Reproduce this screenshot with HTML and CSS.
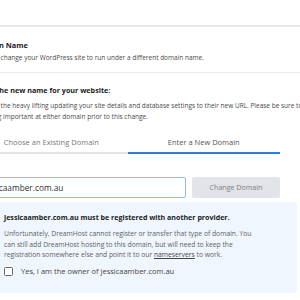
FILE: index.html
```html
<!DOCTYPE html>
<html>
<head>
<meta charset="utf-8">
<link rel="stylesheet" href="styles.css">
</head>
<body>
<div class="topbar"></div>
<div class="page">
  <section class="intro">
    <h2 class="title">Domain Name</h2>
    <p class="lead">You can change your WordPress site to run under a different domain name.</p>
  </section>
  <section class="change">
    <h3 class="subtitle">Enter the new name for your website:</h3>
    <p class="lead">We'll do the heavy lifting updating your site details and database settings to their new URL. Please be sure to back up<br>anything important at either domain prior to this change.</p>
    <div class="tabs">
      <div class="tab">Choose an Existing Domain</div>
      <div class="tab active">Enter a New Domain</div>
    </div>
    <div class="row">
      <div class="input">jessicaamber.com.au</div>
      <div class="btn">Change Domain</div>
    </div>
    <div class="notice">
      <div class="notice-title">jessicaamber.com.au must be registered with another provider.</div>
      <p class="notice-text">Unfortunately, DreamHost cannot register or transfer that type of domain. You<br>can still add DreamHost hosting to this domain, but will need to keep the<br>registration somewhere else and point it to our <u>nameservers</u> to work.</p>
      <label class="check"><span class="box"></span>Yes, I am the owner of jessicaamber.com.au</label>
    </div>
  </section>
</div>
</body>
</html>
```
FILE: styles.css
```css
html, body {
  margin: 0;
  padding: 0;
  background: #fff;
  overflow: hidden;
  width: 300px;
  height: 300px;
}
body {
  font-family: "Open Sans", "Liberation Sans", sans-serif;
  color: #333;
}
.topbar {
  height: 25px;
  border-bottom: 2px solid #e8e8e8;
}
.page {
  margin-left: -25px;
  width: 325px;
}
.intro {
  padding: 12px 0 9px;
  border-bottom: 1px solid #ececec;
}
.title {
  margin: 0;
  font-size: 7.4px;
  font-weight: 700;
  line-height: 12px;
  color: #222;
}
.lead {
  margin: 0;
  font-size: 6.5px;
  line-height: 11px;
  color: #4a4a4a;
  white-space: nowrap;
}
.intro .lead {
  margin-top: 1px;
}
.change {
  padding-top: 11px;
}
.subtitle {
  margin: 0 0 4px;
  font-size: 7.2px;
  font-weight: 700;
  line-height: 12px;
  color: #222;
}
.tabs {
  display: flex;
  width: 305px;
  margin-top: 9px;
}
.tab {
  flex: 1;
  text-align: center;
  font-size: 7.5px;
  line-height: 10px;
  color: #777;
  padding: 6px 0 5px;
  border-bottom: 2px solid #e5e5e5;
}
.tab.active {
  border-bottom-color: #2f7fd6;
  color: #555;
}
.row {
  display: flex;
  gap: 6px;
  width: 305px;
  margin-top: 23px;
}
.input {
  flex: 1;
  height: 21px;
  box-sizing: border-box;
  border: 1px solid #93bbe8;
  border-radius: 2px;
  padding: 0 6px;
  font-size: 8.3px;
  line-height: 19px;
  color: #333;
}
.btn {
  width: 88px;
  height: 21px;
  box-sizing: border-box;
  background: #e1e4e8;
  border-radius: 2px;
  font-size: 7.1px;
  line-height: 21px;
  text-align: center;
  color: #808080;
}
.notice {
  margin-top: 4px;
  width: 322px;
  box-sizing: border-box;
  background: #f0f6fd;
  border-radius: 4px;
  padding: 10px 8px 16px 29px;
}
.notice-title {
  font-size: 7.1px;
  font-weight: 700;
  color: #222;
  line-height: 10px;
}
.notice-text {
  margin: 7px 0 0;
  font-size: 6.75px;
  line-height: 10.5px;
  color: #5f5f5f;
  white-space: nowrap;
}
.notice-text u {
  color: #444;
}
.check {
  display: flex;
  align-items: center;
  gap: 8px;
  margin-top: 5px;
  font-size: 7.5px;
  color: #444;
  line-height: 11px;
}
.box {
  width: 9px;
  height: 9px;
  box-sizing: border-box;
  border: 1px solid #666;
  border-radius: 1.5px;
  background: #fff;
}
```
